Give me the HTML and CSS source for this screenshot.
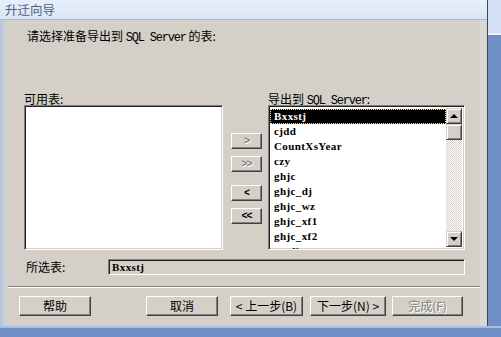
FILE: index.html
```html
<!DOCTYPE html>
<html lang="zh-CN">
<head>
<meta charset="utf-8">
<title>升迁向导</title>
<link rel="stylesheet" href="styles.css">
</head>
<body>
<div class="screen">
  <div class="dialog">
    <div class="titlebar">升迁向导</div>
    <div class="frame">
      <div class="edge-left"></div>
      <div class="content">
        <div class="heading">请选择准备导出到 <span class="en">SQL Server</span> 的表:</div>
        <div class="lists">
          <div class="lbl">可用表:</div>
          <div></div>
          <div class="lbl">导出到 <span class="en">SQL Server</span>:</div>
          <div class="listbox"></div>
          <div class="movers">
            <div class="mbtn dis">&gt;</div>
            <div class="mbtn dis">&gt;&gt;</div>
            <div class="mbtn gap">&lt;</div>
            <div class="mbtn">&lt;&lt;</div>
          </div>
          <div class="listbox right">
            <ul class="items">
              <li class="sel">Bxxstj</li>
              <li>cjdd</li>
              <li>CountXsYear</li>
              <li>czy</li>
              <li>ghjc</li>
              <li>ghjc_dj</li>
              <li>ghjc_wz</li>
              <li>ghjc_xf1</li>
              <li>ghjc_xf2</li>
              <li>sysdiagrams</li>
            </ul>
            <div class="scrollbar">
              <div class="sbtn"><span class="tri up"></span></div>
              <div class="thumb"></div>
              <div class="track"></div>
              <div class="sbtn"><span class="tri down"></span></div>
            </div>
          </div>
        </div>
        <div class="selrow">
          <span class="sellbl">所选表:</span>
          <div class="field">Bxxstj</div>
        </div>
        <div class="sep"></div>
        <div class="buttons">
          <div class="btn help">帮助</div>
          <div class="btn cancel">取消</div>
          <div class="btn back">&lt; 上一步(B)</div>
          <div class="btn next">下一步(N) &gt;</div>
          <div class="btn finish dis">完成(F)</div>
        </div>
      </div>
      <div class="edge-right"></div>
    </div>
  </div>
  <div class="side"><div class="side-top"></div></div>
  <div class="bottom"></div>
</div>
</body>
</html>
```
FILE: styles.css
```css
html, body {
  margin: 0;
  padding: 0;
}
body {
  width: 501px;
  height: 337px;
  overflow: hidden;
  background: #6f8fc7;
  font-family: "Noto Sans CJK SC", "Liberation Sans", sans-serif;
  font-size: 12px;
  color: #000;
}
.en {
  font-family: "Liberation Mono", monospace;
  font-size: 12px;
  letter-spacing: -1.2px;
}
.screen {
  display: grid;
  grid-template-columns: 488px 13px;
  grid-template-rows: 326px 11px;
  width: 501px;
  height: 337px;
}
.dialog {
  display: flex;
  flex-direction: column;
  background: #d4d0c8;
  border-right: 1px solid #3a4660;
  box-sizing: border-box;
}
.titlebar {
  height: 19px;
  line-height: 19px;
  border-bottom: 1px solid #a9b7cb;
  background: linear-gradient(#e8effa, #d9e5f6);
  color: #4f5f7e;
  padding-left: 5px;
  font-size: 12.5px;
}
.frame {
  flex: 1;
  display: flex;
}
.edge-left {
  width: 8px;
  background: linear-gradient(to right, #b4c4dc, #c9d0da 60%, #d2d1cc);
}
.edge-right {
  width: 7px;
  background: #dad7d0;
}
.content {
  width: 472px;
  display: flex;
  flex-direction: column;
}
.heading {
  margin: 9px 0 0 19px;
  height: 13px;
  line-height: 13px;
}
.lists {
  margin: 51px 0 0 16px;
  display: grid;
  grid-template-columns: 199px 31px 195px;
  grid-template-rows: 12px 145px;
  column-gap: 8px;
}
.lists > :nth-child(3) { margin-left: -2px; }
.lbl {
  line-height: 12px;
  height: 12px;
  white-space: nowrap;
}
.listbox {
  background: #fff;
  border: 1px solid;
  border-color: #808080 #fff #fff #808080;
  box-shadow: inset 1px 1px #202020, inset -1px -1px #d4d0c8;
  box-sizing: border-box;
  position: relative;
  overflow: hidden;
}
.listbox.right {
  margin-left: -2px;
  display: flex;
  padding: 2px;
}
.movers {
  display: flex;
  flex-direction: column;
  padding-top: 28px;
  gap: 7px;
}
.mbtn, .btn {
  background: #d4d0c8;
  border: 1px solid;
  border-color: #fff #404040 #404040 #fff;
  box-shadow: inset -1px -1px #808080;
  box-sizing: border-box;
  display: flex;
  align-items: center;
  justify-content: center;
}
.mbtn {
  height: 16px;
  font-family: "Liberation Mono", monospace;
  font-weight: bold;
  font-size: 10px;
  letter-spacing: -1px;
}
.mbtn.gap { margin-top: 6px; }
.dis {
  color: #808080;
  text-shadow: 1px 1px #fff;
}
.items {
  list-style: none;
  margin: 0;
  padding: 1px 0 0;
  width: 175px;
  font-family: "Liberation Serif", serif;
  font-weight: bold;
  font-size: 11px;
  letter-spacing: 0.4px;
}
.items li {
  height: 15px;
  line-height: 15px;
  padding-left: 3px;
}
.items li.sel {
  background: #000;
  color: #fff;
  outline: 1px dotted #e8e8b0;
  outline-offset: -1px;
  margin-left: -1px;
  padding-left: 4px;
  width: 172px;
}
.scrollbar {
  width: 16px;
  display: flex;
  flex-direction: column;
}
.sbtn, .thumb {
  height: 16px;
  background: #d4d0c8;
  border: 1px solid;
  border-color: #d4d0c8 #404040 #404040 #d4d0c8;
  box-shadow: inset 1px 1px #fff, inset -1px -1px #808080;
  box-sizing: border-box;
  display: flex;
  align-items: center;
  justify-content: center;
}
.track {
  flex: 1;
  background: repeating-conic-gradient(#fff 0 25%, #d4d0c8 0 50%) 0 0 / 2px 2px;
}
.tri {
  width: 0;
  height: 0;
  border-left: 4px solid transparent;
  border-right: 4px solid transparent;
}
.tri.up { border-bottom: 4px solid #000; }
.tri.down { border-top: 4px solid #000; }
.selrow {
  margin: 9px 0 0 18px;
  display: flex;
  align-items: center;
  height: 16px;
}
.sellbl {
  width: 82px;
  line-height: 16px;
}
.field {
  width: 357px;
  height: 16px;
  box-sizing: border-box;
  border: 1px solid;
  border-color: #808080 #fff #fff #808080;
  box-shadow: inset 1px 1px #202020, inset -1px -1px #d4d0c8;
  padding-left: 3px;
  line-height: 14px;
  font-family: "Liberation Serif", serif;
  font-weight: bold;
  font-size: 11px;
  letter-spacing: 0.4px;
}
.sep {
  margin-top: 11px;
  height: 1px;
  background: #808080;
  border-bottom: 1px solid #fff;
}
.buttons {
  margin-top: 8px;
  padding-left: 11px;
  display: flex;
  height: 20px;
}
.btn {
  height: 20px;
  white-space: nowrap;
  line-height: 18px;
}
.help { width: 72px; }
.cancel { width: 72px; margin-left: 55px; }
.back { width: 73px; margin-left: 12px; }
.next { width: 76px; margin-left: 7px; }
.finish { width: 71px; margin-left: 6px; }
.side {
  background: #6f8fc7;
}
.side-top {
  height: 33px;
  background: #d3e0f3;
  border-bottom: 2px solid #eef3fb;
}
.bottom {
  grid-column: 1 / 3;
  background: #7090c8;
  border-top: 2px solid #a9bde2;
}
```
